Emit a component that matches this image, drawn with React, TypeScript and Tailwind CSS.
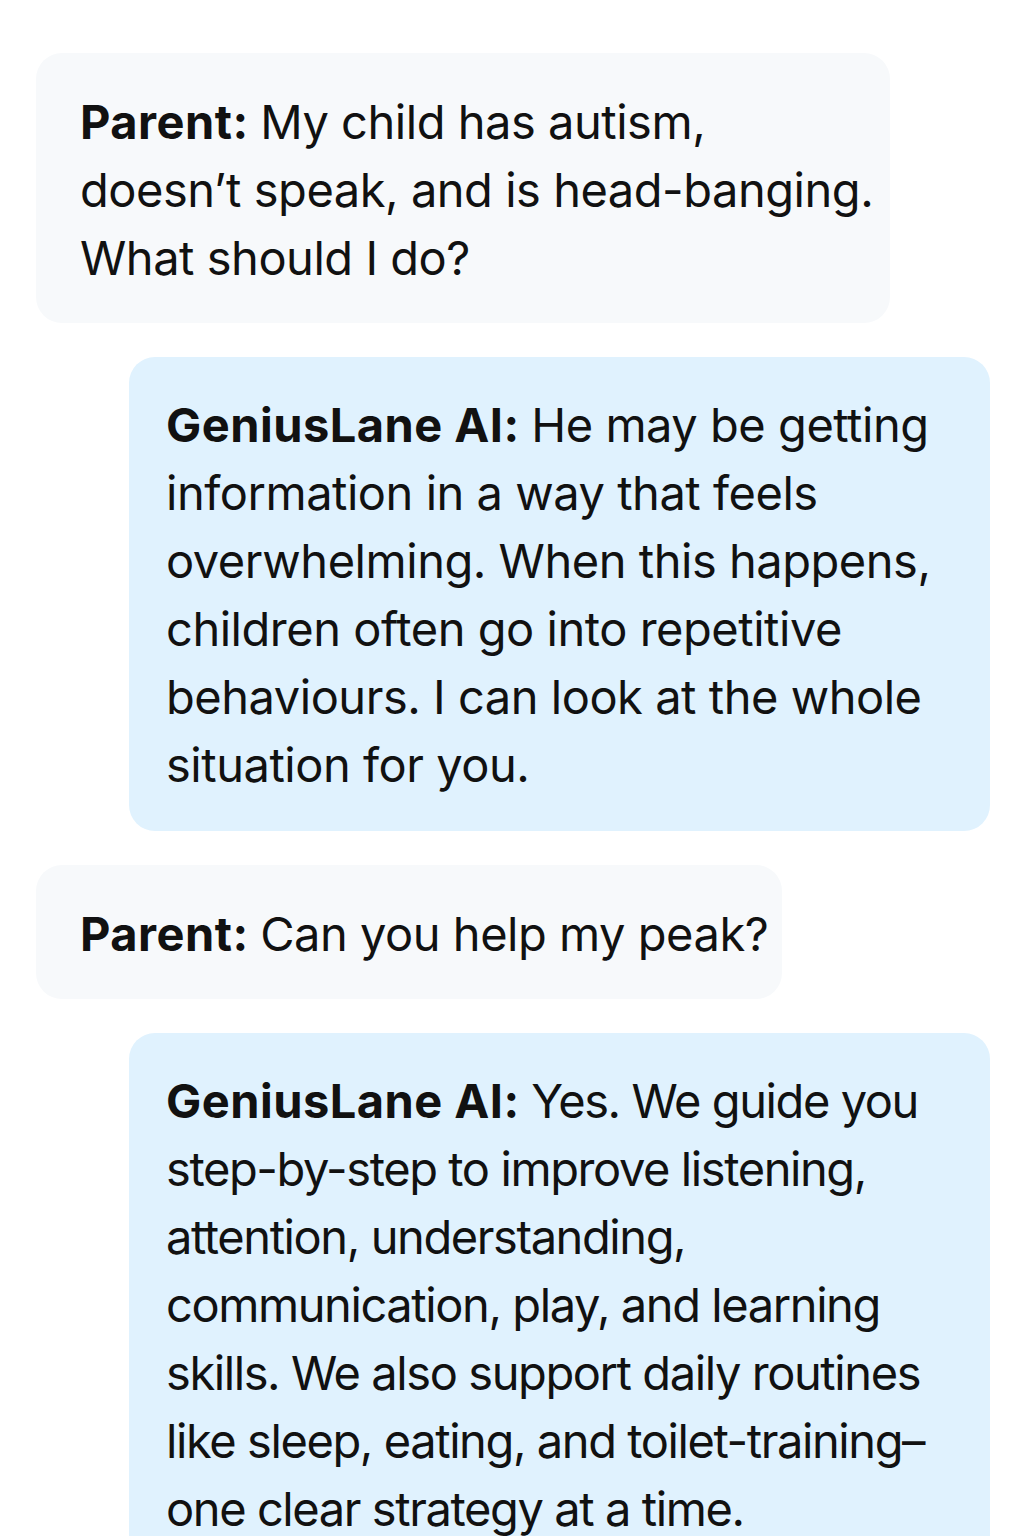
import React from 'react'

type Msg = {
  who: 'parent' | 'ai'
  lines: string[]
  tight?: boolean
}

const messages: Msg[] = [
  {
    who: 'parent',
    lines: [
      'My child has autism,',
      'doesn\u2019t speak, and is head-banging.',
      'What should I do?',
    ],
  },
  {
    who: 'ai',
    lines: [
      'He may be getting',
      'information in a way that feels',
      'overwhelming. When this happens,',
      'children often go into repetitive',
      'behaviours. I can look at the whole',
      'situation for you.',
    ],
  },
  {
    who: 'parent',
    lines: ['Can you help my peak?'],
  },
  {
    who: 'ai',
    tight: true,
    lines: [
      'Yes. We guide you',
      'step-by-step to improve listening,',
      'attention, understanding,',
      'communication, play, and learning',
      'skills. We also support daily routines',
      'like sleep, eating, and toilet-training\u2013',
      'one clear strategy at a time.',
    ],
  },
]

function Bubble({ msg, width }: { msg: Msg; width: string }) {
  const isAi = msg.who === 'ai'
  return (
    <div
      className={
        isAi
          ? `ml-[93px] ${width} rounded-[26px] bg-[#e0f2fe] pl-[37px] pt-[34px] pb-[32px]`
          : `${width} rounded-[26px] bg-[#f7f9fb] pl-[44px] pt-[35px] pb-[31px]`
      }
    >
      <p
        className={
          msg.tight
            ? 'whitespace-nowrap text-[47px] leading-[68px] tracking-[-0.03em] text-[#111111]'
            : 'whitespace-nowrap text-[47px] leading-[68px] tracking-[-0.01em] text-[#111111]'
        }
      >
        {msg.lines.map((line, i) => (
          <React.Fragment key={i}>
            {i === 0 && (
              <span className="font-bold tracking-[0.01em]">
                {isAi ? 'GeniusLane AI:' : 'Parent:'}{' '}
              </span>
            )}
            {line}
            {i < msg.lines.length - 1 && <br />}
          </React.Fragment>
        ))}
      </p>
    </div>
  )
}

export default function App() {
  const widths = ['w-[854px]', 'w-[861px]', 'w-[746px]', 'w-[861px]']

  return (
    <div
      className="min-h-screen bg-white pl-[36px] pt-[53px] flex flex-col gap-[34px]"
      style={{ fontFamily: 'Inter, "Noto Sans", sans-serif' }}
    >
      {messages.map((m, i) => (
        <Bubble key={i} msg={m} width={widths[i]} />
      ))}
    </div>
  )
}
